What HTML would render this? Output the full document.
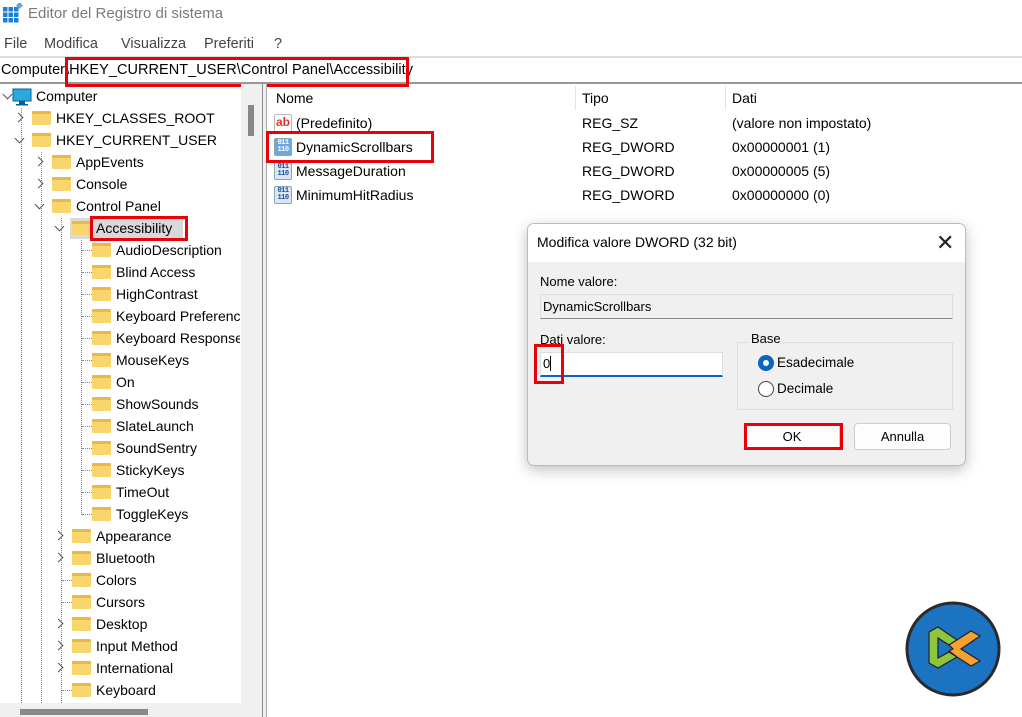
<!DOCTYPE html>
<html><head><meta charset="utf-8"><style>
*{margin:0;padding:0;box-sizing:border-box}
body{width:1022px;height:717px;overflow:hidden;background:#fff;font-family:"Liberation Sans",sans-serif;font-size:14px;color:#000;position:relative}
.a{position:absolute;white-space:nowrap}
.t{position:absolute;line-height:22px;height:22px;white-space:nowrap}
.f{position:absolute;width:19px;height:14px;background:#f9d56e;border-top:3px solid #e9b84a;border-radius:1px}
.chev{position:absolute;width:7px;height:7px;border-right:1.3px solid #555;border-bottom:1.3px solid #555}
.r{transform:rotate(-45deg)}
.d{transform:rotate(45deg)}
.vd{position:absolute;border-left:1px dotted #888;width:0}
.hd{position:absolute;border-top:1px dotted #888;height:0;width:10px}
.red{position:absolute;border:3px solid #e8000b}
.ico{position:absolute;width:18px;height:18px;background:#dde6f0;border:1px solid #8aa;border-radius:2px;font:bold 7px/7px "Liberation Mono",monospace;color:#1a4fa0;text-align:center;padding-top:1px;letter-spacing:-0.5px}
.m{position:absolute;top:36px;color:#444;font-size:14.5px}
</style></head><body>
<svg class="a" style="left:3px;top:3px" width="20" height="20" viewBox="0 0 20 20"><g fill="#1e7fd0"><rect x="0" y="4" width="4.5" height="4.5"/><rect x="5.5" y="4" width="4.5" height="4.5"/><rect x="11" y="4" width="4.5" height="4.5"/><rect x="0" y="9.5" width="4.5" height="4.5"/><rect x="5.5" y="9.5" width="4.5" height="4.5"/><rect x="11" y="9.5" width="4.5" height="4.5"/><rect x="0" y="15" width="4.5" height="4.5"/><rect x="5.5" y="15" width="4.5" height="4.5"/><rect x="11" y="15" width="4.5" height="4.5"/></g><rect x="14" y="0" width="5" height="5" fill="#5aa8e8" transform="rotate(45 16.5 2.5)"/></svg>
<div class="a" style="left:28px;top:5px;font-size:15px;color:#7a7a7a">Editor del Registro di sistema</div>
<div class="m" style="left:4px">File</div>
<div class="m" style="left:44px">Modifica</div>
<div class="m" style="left:121px">Visualizza</div>
<div class="m" style="left:204px">Preferiti</div>
<div class="m" style="left:274px">?</div>
<div class="a" style="left:0;top:56px;width:1022px;height:2px;background:#ddd"></div>
<div class="a" style="left:0;top:82px;width:1022px;height:2px;background:#999"></div>
<div class="a" style="left:1px;top:62px;font-size:14.5px;letter-spacing:0.05px">Computer\HKEY_CURRENT_USER\Control Panel\Accessibility</div>
<div class="red" style="left:65px;top:57px;width:344px;height:30px"></div>
<div class="a" style="left:241px;top:84px;width:21px;height:633px;background:#f0f0f0"></div>
<div class="a" style="left:248px;top:105px;width:6px;height:31px;background:#888"></div>
<div class="a" style="left:262px;top:84px;width:1px;height:633px;background:#888"></div>
<div class="a" style="left:263px;top:84px;width:3px;height:633px;background:#f0f0f0"></div>
<div class="a" style="left:266px;top:84px;width:1px;height:633px;background:#aaa"></div>
<div class="a" style="left:0;top:703px;width:241px;height:14px;background:#f0f0f0"></div>
<div class="a" style="left:20px;top:709px;width:128px;height:6px;background:#888"></div>
<div class="vd" style="left:21px;top:108px;height:595px"></div>
<div class="vd" style="left:41px;top:152px;height:551px"></div>
<div class="vd" style="left:61px;top:218px;height:485px"></div>
<div class="vd" style="left:81px;top:240px;height:275px"></div>
<svg class="a" style="left:12px;top:88px" width="20" height="18"><rect x="1" y="1" width="18" height="12" fill="#2aa9e0" stroke="#0b5f8f"/><rect x="7" y="13" width="6" height="3" fill="#0b5f8f"/><rect x="4" y="16" width="12" height="1.5" fill="#0b5f8f"/></svg>
<div class="chev d" style="left:4px;top:91px"></div>
<div class="t" style="left:36px;top:85px">Computer</div>
<div class="chev r" style="left:15px;top:114px"></div><div class="f" style="left:32px;top:111px"></div><div class="t" style="left:56px;top:107px">HKEY_CLASSES_ROOT</div>
<div class="chev d" style="left:16px;top:135px"></div><div class="f" style="left:32px;top:133px"></div><div class="t" style="left:56px;top:129px">HKEY_CURRENT_USER</div>
<div class="chev r" style="left:35px;top:158px"></div><div class="f" style="left:52px;top:155px"></div><div class="t" style="left:76px;top:151px">AppEvents</div>
<div class="chev r" style="left:35px;top:180px"></div><div class="f" style="left:52px;top:177px"></div><div class="t" style="left:76px;top:173px">Console</div>
<div class="chev d" style="left:36px;top:201px"></div><div class="f" style="left:52px;top:199px"></div><div class="t" style="left:76px;top:195px">Control Panel</div>
<div class="a" style="left:70px;top:218px;width:113px;height:21px;background:#d9d9d9"></div>
<div class="chev d" style="left:56px;top:223px"></div><div class="f" style="left:72px;top:221px"></div><div class="t" style="left:96px;top:217px">Accessibility</div>
<div class="red" style="left:90px;top:216px;width:98px;height:25px"></div>
<div class="hd" style="left:82px;top:250px"></div><div class="f" style="left:92px;top:243px"></div><div class="t" style="left:116px;top:239px">AudioDescription</div>
<div class="hd" style="left:82px;top:272px"></div><div class="f" style="left:92px;top:265px"></div><div class="t" style="left:116px;top:261px">Blind Access</div>
<div class="hd" style="left:82px;top:294px"></div><div class="f" style="left:92px;top:287px"></div><div class="t" style="left:116px;top:283px">HighContrast</div>
<div class="hd" style="left:82px;top:316px"></div><div class="f" style="left:92px;top:309px"></div><div class="t" style="left:116px;top:305px;width:124px;overflow:hidden">Keyboard Preference</div>
<div class="hd" style="left:82px;top:338px"></div><div class="f" style="left:92px;top:331px"></div><div class="t" style="left:116px;top:327px;width:124px;overflow:hidden">Keyboard Response</div>
<div class="hd" style="left:82px;top:360px"></div><div class="f" style="left:92px;top:353px"></div><div class="t" style="left:116px;top:349px">MouseKeys</div>
<div class="hd" style="left:82px;top:382px"></div><div class="f" style="left:92px;top:375px"></div><div class="t" style="left:116px;top:371px">On</div>
<div class="hd" style="left:82px;top:404px"></div><div class="f" style="left:92px;top:397px"></div><div class="t" style="left:116px;top:393px">ShowSounds</div>
<div class="hd" style="left:82px;top:426px"></div><div class="f" style="left:92px;top:419px"></div><div class="t" style="left:116px;top:415px">SlateLaunch</div>
<div class="hd" style="left:82px;top:448px"></div><div class="f" style="left:92px;top:441px"></div><div class="t" style="left:116px;top:437px">SoundSentry</div>
<div class="hd" style="left:82px;top:470px"></div><div class="f" style="left:92px;top:463px"></div><div class="t" style="left:116px;top:459px">StickyKeys</div>
<div class="hd" style="left:82px;top:492px"></div><div class="f" style="left:92px;top:485px"></div><div class="t" style="left:116px;top:481px">TimeOut</div>
<div class="hd" style="left:82px;top:514px"></div><div class="f" style="left:92px;top:507px"></div><div class="t" style="left:116px;top:503px">ToggleKeys</div>
<div class="chev r" style="left:55px;top:532px"></div><div class="f" style="left:72px;top:529px"></div><div class="t" style="left:96px;top:525px">Appearance</div>
<div class="chev r" style="left:55px;top:554px"></div><div class="f" style="left:72px;top:551px"></div><div class="t" style="left:96px;top:547px">Bluetooth</div>
<div class="hd" style="left:62px;top:580px"></div><div class="f" style="left:72px;top:573px"></div><div class="t" style="left:96px;top:569px">Colors</div>
<div class="hd" style="left:62px;top:602px"></div><div class="f" style="left:72px;top:595px"></div><div class="t" style="left:96px;top:591px">Cursors</div>
<div class="chev r" style="left:55px;top:620px"></div><div class="f" style="left:72px;top:617px"></div><div class="t" style="left:96px;top:613px">Desktop</div>
<div class="chev r" style="left:55px;top:642px"></div><div class="f" style="left:72px;top:639px"></div><div class="t" style="left:96px;top:635px">Input Method</div>
<div class="chev r" style="left:55px;top:664px"></div><div class="f" style="left:72px;top:661px"></div><div class="t" style="left:96px;top:657px">International</div>
<div class="hd" style="left:62px;top:690px"></div><div class="f" style="left:72px;top:683px"></div><div class="t" style="left:96px;top:679px">Keyboard</div>
<div class="t" style="left:276px;top:87px">Nome</div>
<div class="a" style="left:575px;top:86px;width:1px;height:24px;background:#e5e5e5"></div>
<div class="t" style="left:582px;top:87px">Tipo</div>
<div class="a" style="left:725px;top:86px;width:1px;height:24px;background:#e5e5e5"></div>
<div class="t" style="left:732px;top:87px">Dati</div>
<div class="a" style="left:274px;top:114px;width:18px;height:18px;border:1px solid #bbb;border-radius:2px;background:#fff;color:#d33;font:bold 12px/14px 'Liberation Sans',sans-serif;text-align:center">ab</div>
<div class="t" style="left:296px;top:112px">(Predefinito)</div>
<div class="ico" style="left:274px;top:138px;background:#6da7e0;color:#fff">011<br>110</div>
<div class="t" style="left:296px;top:136px">DynamicScrollbars</div>
<div class="ico" style="left:274px;top:162px">011<br>110</div>
<div class="t" style="left:296px;top:160px">MessageDuration</div>
<div class="ico" style="left:274px;top:186px">011<br>110</div>
<div class="t" style="left:296px;top:184px">MinimumHitRadius</div>
<div class="red" style="left:266px;top:131px;width:168px;height:32px"></div>
<div class="t" style="left:582px;top:112px">REG_SZ</div><div class="t" style="left:732px;top:112px">(valore non impostato)</div>
<div class="t" style="left:582px;top:136px">REG_DWORD</div><div class="t" style="left:732px;top:136px">0x00000001 (1)</div>
<div class="t" style="left:582px;top:160px">REG_DWORD</div><div class="t" style="left:732px;top:160px">0x00000005 (5)</div>
<div class="t" style="left:582px;top:184px">REG_DWORD</div><div class="t" style="left:732px;top:184px">0x00000000 (0)</div>
<div class="a" style="left:527px;top:223px;width:439px;height:243px;background:#f0f0f0;border:1px solid #bbb;border-radius:7px;box-shadow:0 4px 14px rgba(0,0,0,.25);overflow:hidden">
 <div class="a" style="left:0;top:0;width:439px;height:38px;background:#fff"></div>
 <div class="a" style="left:9px;top:10px;font-size:14px">Modifica valore DWORD (32 bit)</div>
 <div class="a" style="left:408px;top:6px;font-size:22px;font-weight:300;color:#222">✕</div>
 <div class="a" style="left:12px;top:50px;font-size:13px">Nome valore:</div>
 <div class="a" style="left:12px;top:70px;width:413px;height:25px;background:#f0f0f0;border:1px solid #ddd;border-bottom:1px solid #888;font-size:13px;line-height:23px;padding-left:2px">DynamicScrollbars</div>
 <div class="a" style="left:12px;top:108px;font-size:13px">Dati valore:</div>
 <div class="a" style="left:12px;top:128px;width:183px;height:25px;background:#fff;border:1px solid #ddd;border-bottom:2px solid #0a64c0;font-size:13px;line-height:22px;padding-left:2px">0<span style="display:inline-block;width:1px;height:15px;background:#000;vertical-align:-3px"></span></div>
 <div class="a" style="left:209px;top:118px;width:216px;height:68px;border:1px solid #ddd"></div>
 <div class="a" style="left:220px;top:107px;font-size:13px;background:#f0f0f0;padding:0 3px">Base</div>
 <div class="a" style="left:230px;top:131px;width:16px;height:16px;border-radius:50%;background:#0a64c0"><div class="a" style="left:5px;top:5px;width:6px;height:6px;border-radius:50%;background:#fff"></div></div>
 <div class="a" style="left:249px;top:131px;font-size:13.5px">Esadecimale</div>
 <div class="a" style="left:230px;top:157px;width:16px;height:16px;border-radius:50%;border:1px solid #444;background:#fff"></div>
 <div class="a" style="left:249px;top:157px;font-size:13.5px">Decimale</div>
 <div class="a" style="left:216px;top:199px;width:96px;height:27px;background:#fdfdfd;border:1px solid #ccc;border-top:1px solid #0a64c0;border-radius:4px;font-size:13px;line-height:25px;text-align:center">OK</div>
 <div class="a" style="left:326px;top:199px;width:97px;height:27px;background:#fdfdfd;border:1px solid #ccc;border-radius:4px;font-size:13px;line-height:25px;text-align:center">Annulla</div>
</div>
<div class="red" style="left:534px;top:344px;width:30px;height:40px"></div>
<div class="red" style="left:744px;top:423px;width:99px;height:27px"></div>
<svg class="a" style="left:905px;top:601px" width="96" height="96" viewBox="0 0 96 96">
<circle cx="48" cy="48" r="46" fill="#1c73c2" stroke="#2a2a2a" stroke-width="3"/>
<polygon points="24,31 33,26 52,39 44,44 33,37 33,57 44,51 52,56 33,67 24,62" fill="#8cc63f" stroke="#222" stroke-width="1.2"/>
<polygon points="44,44 66,30 75,35 56,48 75,60 66,65 52,56 44,50 48,48" fill="#f7a133" stroke="#222" stroke-width="1.2"/>
</svg>
</body></html>
